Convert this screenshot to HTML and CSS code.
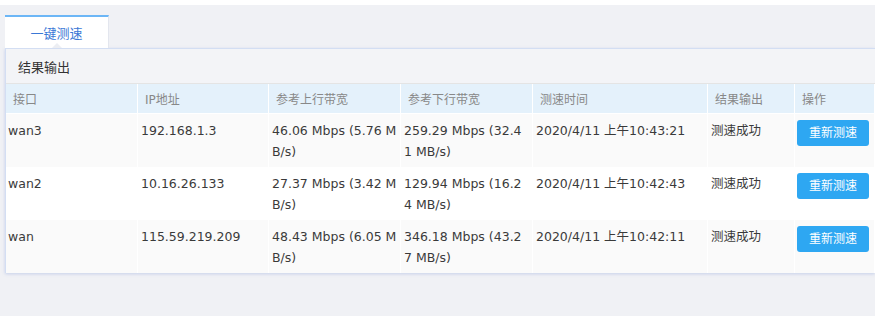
FILE: index.html
```html
<!DOCTYPE html>
<html lang="zh-CN">
<head>
<meta charset="utf-8">
<title>一键测速</title>
<link rel="stylesheet" href="styles.css">
</head>
<body>
<div class="page">
  <div class="tabs">
    <div class="tab">一键测速</div>
  </div>
  <div class="panel">
    <div class="panel-head">结果输出</div>
    <table class="result">
      <thead>
        <tr>
          <th class="c1">接口</th>
          <th class="c2">IP地址</th>
          <th class="c3">参考上行带宽</th>
          <th class="c4">参考下行带宽</th>
          <th class="c5">测速时间</th>
          <th class="c6">结果输出</th>
          <th class="c7">操作</th>
        </tr>
      </thead>
      <tbody>
        <tr class="odd">
          <td>wan3</td>
          <td>192.168.1.3</td>
          <td class="up">46.06 Mbps (5.76 MB/s)</td>
          <td>259.29 Mbps (32.41 MB/s)</td>
          <td>2020/4/11 上午10:43:21</td>
          <td>测速成功</td>
          <td class="op"><span class="btn">重新测速</span></td>
        </tr>
        <tr>
          <td>wan2</td>
          <td>10.16.26.133</td>
          <td class="up">27.37 Mbps (3.42 MB/s)</td>
          <td>129.94 Mbps (16.24 MB/s)</td>
          <td>2020/4/11 上午10:42:43</td>
          <td>测速成功</td>
          <td class="op"><span class="btn">重新测速</span></td>
        </tr>
        <tr class="odd">
          <td>wan</td>
          <td>115.59.219.209</td>
          <td class="up">48.43 Mbps (6.05 MB/s)</td>
          <td>346.18 Mbps (43.27 MB/s)</td>
          <td>2020/4/11 上午10:42:11</td>
          <td>测速成功</td>
          <td class="op"><span class="btn">重新测速</span></td>
        </tr>
      </tbody>
    </table>
  </div>
</div>
</body>
</html>
```
FILE: styles.css
```css
html, body {
  margin: 0;
  padding: 0;
  background: #ffffff;
}
body {
  font-family: "DejaVu Sans", "Noto Sans CJK SC", sans-serif;
  font-size: 12.5px;
  color: #333333;
  overflow: hidden;
}
.page {
  margin-top: 5px;
  height: 311px;
  box-sizing: border-box;
  background: #f0f1f5;
  padding: 10px 0 0 5px;
}
.tabs {
  display: flex;
}
.tab {
  position: relative;
  width: 103px;
  height: 31px;
  border-top: 2px solid #6cb6f6;
  border-right: 1px solid #e3e6ee;
  background: #ffffff;
  color: #3b78d6;
  font-size: 13px;
  display: flex;
  align-items: center;
  justify-content: center;
}
.tab::after {
  content: "";
  position: absolute;
  left: 47px;
  bottom: 0;
  width: 0;
  height: 0;
  border-left: 5px solid transparent;
  border-right: 5px solid transparent;
  border-bottom: 5px solid #eceef3;
}
.panel {
  background: #ffffff;
  border-top: 1px solid #d3def3;
  border-left: 1px solid #d3def3;
  box-shadow: 0 1px 3px rgba(120, 150, 215, 0.35);
}
.panel-head {
  height: 34px;
  padding-left: 12px;
  background: #f3f4f7;
  border-bottom: 1px solid #e4e4e4;
  font-size: 13px;
  color: #333333;
  display: flex;
  align-items: center;
}
.result {
  width: 869px;
  table-layout: fixed;
  border-collapse: separate;
  border-spacing: 0;
}
.result th,
.result td {
  box-sizing: border-box;
  border-right: 1px solid #ffffff;
  text-align: left;
  vertical-align: top;
}
.result th {
  height: 30px;
  padding: 0 4px 0 7px;
  background: #e4f1fb;
  color: #888888;
  font-weight: normal;
  font-size: 12px;
  vertical-align: middle;
  border-bottom: 1px solid #ffffff;
}
.result td {
  height: 53px;
  padding: 6px 4px 4px 3px;
  line-height: 21px;
  word-break: break-all;
  color: #3a3a3a;
}
.result td:first-child {
  padding-left: 2px;
}
.result td.up {
  padding-right: 0;
}
.result tr.odd td {
  background: #fafafa;
}
.c1 { width: 132px; }
.c2 { width: 131px; }
.c3 { width: 132px; }
.c4 { width: 132px; }
.c5 { width: 175px; }
.c6 { width: 87px; }
.c7 { width: 80px; }
.result td.op {
  padding: 6px 0 0 2px;
}
.btn {
  display: block;
  width: 72px;
  height: 26px;
  line-height: 26px;
  text-align: center;
  white-space: nowrap;
  border-radius: 3px;
  background: #2ea7f2;
  color: #ffffff;
  font-size: 12px;
}
```
